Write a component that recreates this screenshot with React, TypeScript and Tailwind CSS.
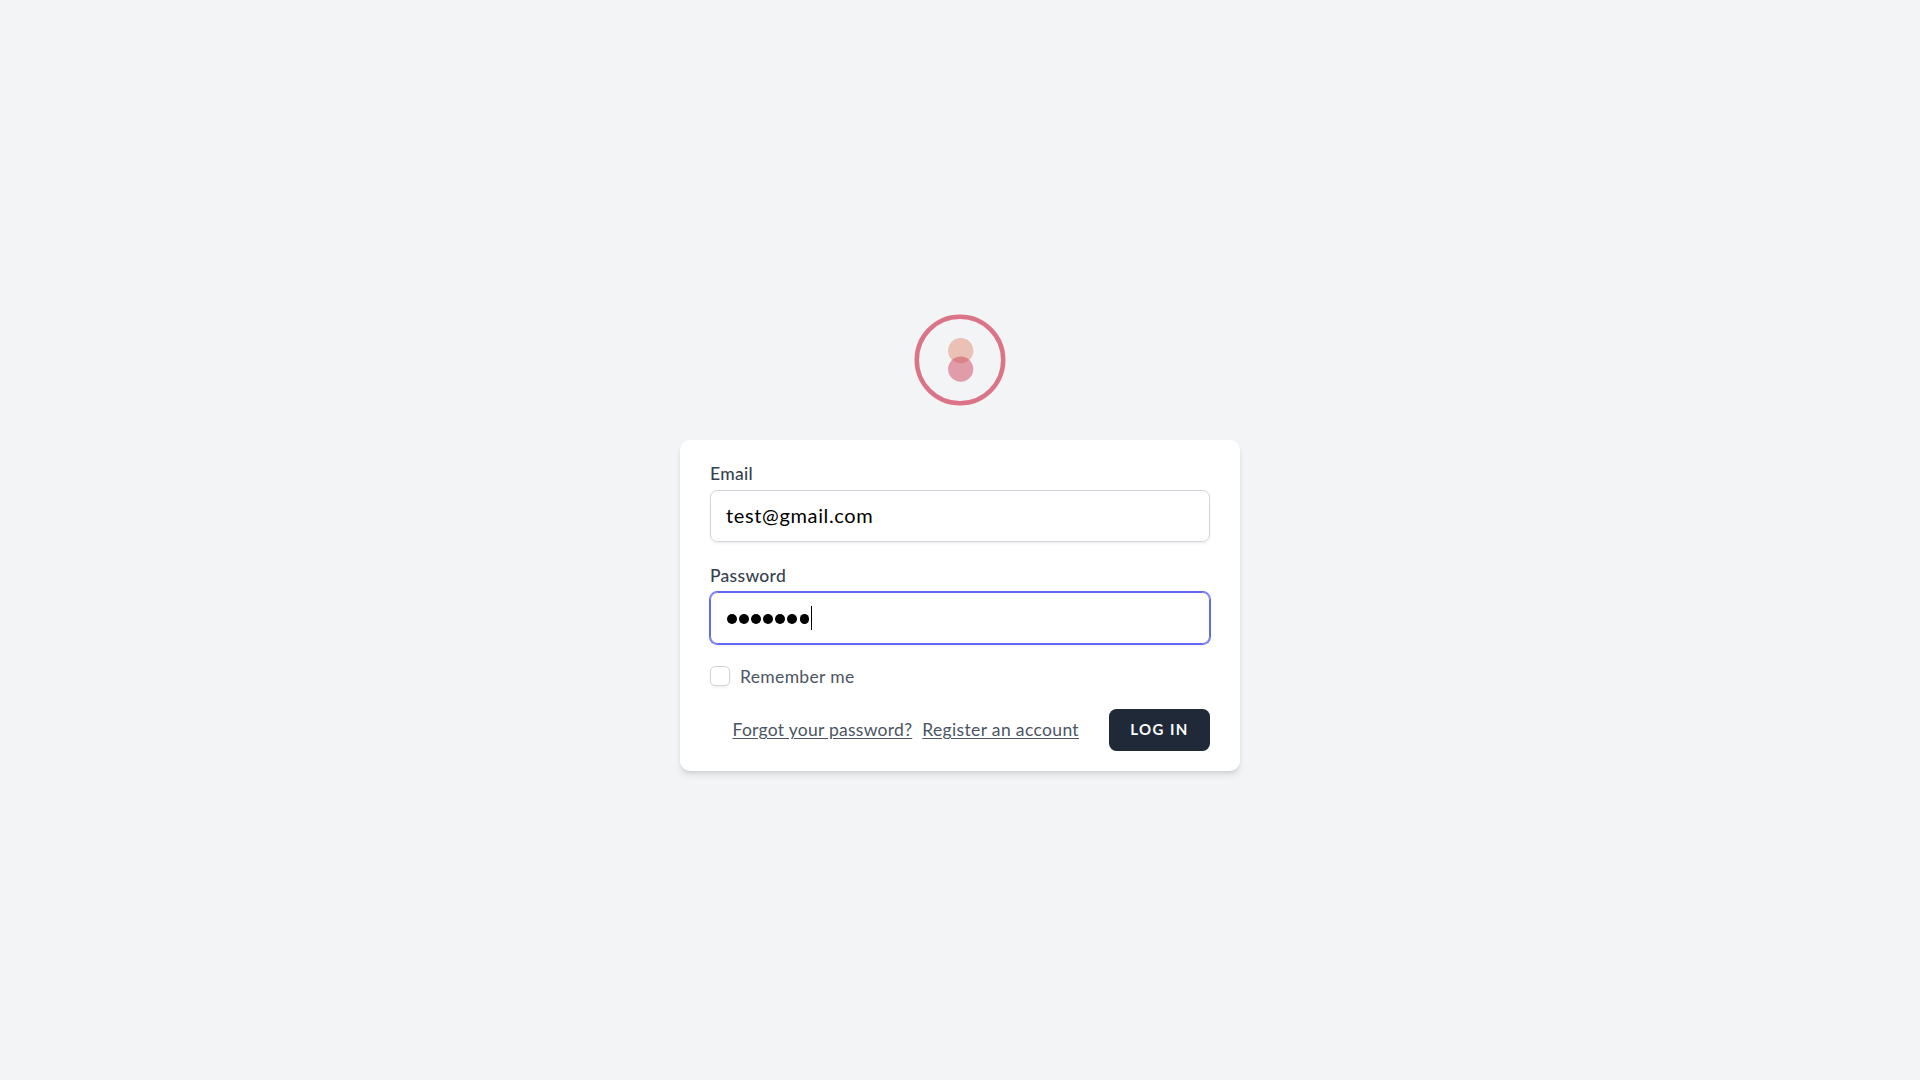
const PASSWORD_LENGTH = 7;

function Logo() {
  return (
    <svg viewBox="0 0 100 100" className="size-[100px]" fill="none" aria-hidden="true">
      <circle cx="50" cy="50" r="43.2" stroke="#dc7487" strokeWidth="4.5" />
      <circle cx="50.7" cy="40.7" r="12.6" fill="#e18d72" fillOpacity="0.5" />
      <circle cx="50.7" cy="59.1" r="12.6" fill="#d04a62" fillOpacity="0.52" />
    </svg>
  );
}

export default function App() {
  return (
    <div className="flex min-h-screen flex-col items-center justify-center bg-gray-100 font-['Lato',sans-serif] text-[#111827]">
      <Logo />
      <form className="mt-[30px] w-[560px] rounded-[10px] bg-white px-[30px] py-5 shadow-[0_5px_7.5px_-1.25px_rgb(0_0_0/0.1),0_2.5px_5px_-2.5px_rgb(0_0_0/0.1)]">
        <div>
          <div className="h-[25px] pt-px text-[17.5px] leading-[25px] font-medium tracking-[0.3px] text-[#374151]">Email</div>
          <div className="mt-[5px] flex h-[52px] items-center rounded-[7.5px] border border-[#d1d5db] px-[15px] pb-0.5 text-[20px] leading-[30px] tracking-[0.64px] text-black shadow-[0_1.25px_2.5px_0_rgb(0_0_0/0.05)]">
            test@gmail.com
          </div>
        </div>
        <div className="mt-5">
          <div className="h-[25px] pt-px text-[17.5px] leading-[25px] font-medium tracking-[0.28px] text-[#374151]">Password</div>
          <div className="mt-[5px] flex h-[52px] items-center rounded-[7.5px] border border-[#6366f1] px-[15px] shadow-[0_0_0_1px_#6366f1,0_1.25px_2.5px_0_rgb(0_0_0/0.05)]">
            <div className="ml-px mt-[3px] flex gap-[2.6px]">
              {Array.from({ length: PASSWORD_LENGTH }, (_, i) => (
                <span key={i} className="size-[9.5px] rounded-full bg-black" />
              ))}
            </div>
            <span className="ml-[2px] h-6 w-px bg-black" />
          </div>
        </div>
        <div className="mt-5 flex h-[25px] items-center">
          <span className="size-5 rounded-[5px] border border-[#d1d5db] bg-white shadow-[0_1.25px_2.5px_0_rgb(0_0_0/0.05)]" />
          <span className="ml-2.5 pt-px text-[17.5px] leading-[25px] tracking-[0.34px] text-[#4b5563]">Remember me</span>
        </div>
        <div className="mt-5 flex h-[42px] items-center justify-end text-[17.5px] leading-[25px] text-[#4b5563]">
          <a className="tracking-[0.27px] underline underline-offset-2">Forgot your password?</a>
          <a className="ml-2.5 tracking-[0.35px] underline underline-offset-2">Register an account</a>
          <button
            type="button"
            className="ml-[30px] h-[42px] w-[101px] rounded-[7.5px] bg-[#1f2937] pb-0.5 text-[15px] leading-5 font-bold tracking-[1.4px] text-white"
          >
            LOG IN
          </button>
        </div>
      </form>
    </div>
  );
}
